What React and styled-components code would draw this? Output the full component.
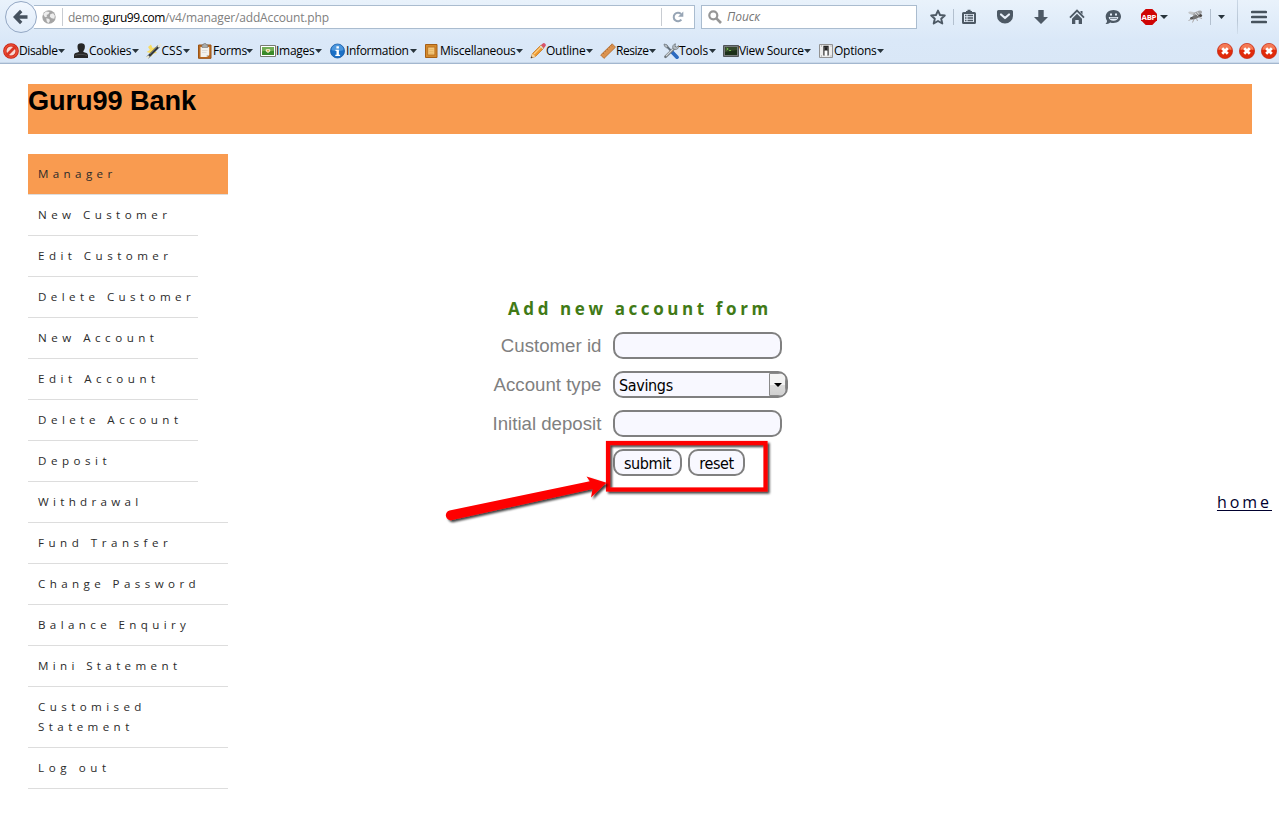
import React from 'react';
import styled, { createGlobalStyle } from 'styled-components';

const Global = createGlobalStyle`
  * { box-sizing: border-box; }
  body { margin: 0; background: #fff; overflow: hidden; font-family: "Open Sans", "Noto Sans", sans-serif; }
  svg { display: block; flex: none; }
`;

const Screen = styled.div`
  position: relative;
  width: 1279px;
  height: 823px;
  overflow: hidden;
`;

/* ---------- browser chrome ---------- */
const Chrome = styled.header`
  height: 64px;
  border-bottom: 1px solid #a3b7cf;
  box-shadow: inset 0 -1px #c9d8e9;
  background: linear-gradient(#e9f2fb 0, #dae8f8 40px, #d9e7f7 100%);
`;
const NavBar = styled.div`
  display: flex;
  align-items: center;
  height: 34px;
  padding-left: 5px;
`;
const BackButton = styled.button`
  position: relative;
  z-index: 1;
  flex: none;
  display: grid;
  place-items: center;
  width: 32px;
  height: 32px;
  padding: 0;
  border: 1px solid #94a8c4;
  border-radius: 50%;
  background: linear-gradient(#f1f7fe, #dfebf9);
`;
const UrlBox = styled.div`
  display: flex;
  align-items: center;
  width: 661px;
  height: 24px;
  margin-left: -3px;
  padding-left: 8px;
  border: 1px solid #aabccf;
  border-left: 0;
  background: #fff;
`;
const FieldLine = styled.i`
  width: 1px;
  height: 18px;
  margin: ${(p) => p.$m || '0'};
  background: #c8ccd2;
`;
const Url = styled.div`
  flex: 1;
  display: flex;
  font-size: 12px;
  line-height: 23px;
  white-space: pre;
  color: #808080;
`;
const UrlPart = styled.span`
  width: ${(p) => p.$w}px;
  letter-spacing: ${(p) => p.$ls}px;
  color: ${(p) => (p.$strong ? '#000' : 'inherit')};
`;
const SearchBox = styled.div`
  display: flex;
  align-items: center;
  gap: 5px;
  width: 216px;
  height: 24px;
  margin-left: 6px;
  padding-left: 6px;
  border: 1px solid #aabccf;
  background: #fff;
  color: #757575;
  font: italic 12px/22px "Open Sans", sans-serif;
`;
const Slot = styled.span`
  display: block;
  margin-left: ${(p) => p.$gap}px;
`;
const Rule = styled.i`
  width: 1px;
  height: ${(p) => p.$h}px;
  margin-left: ${(p) => p.$gap}px;
  background: ${(p) => (p.$fade ? 'linear-gradient(#cbd8e6, #b9c7d6 60%, #d2dfed)' : '#b3c0cf')};
`;
const DevBar = styled.div`
  display: flex;
  align-items: center;
  height: 30px;
  padding: 3px 3px 0 3px;
`;
const DevItem = styled.div`
  display: flex;
  align-items: center;
  margin-right: ${(p) => p.$after}px;
`;
const DevLabel = styled.span`
  width: ${(p) => p.$w}px;
  font-size: 12px;
  line-height: 16px;
  letter-spacing: ${(p) => p.$ls}px;
  white-space: nowrap;
  color: #000;
`;
const Errors = styled.div`
  display: flex;
  gap: 6px;
  margin-left: auto;
  margin-right: -1px;
`;

/* ---------- page ---------- */
const Page = styled.main`
  padding: 20px 27px 0 28px;
`;
const Banner = styled.h1`
  height: 50px;
  margin: 0 0 20px;
  background: #f99b50;
  color: #000;
  font: bold 27.2px/34px "Liberation Sans", Arial, sans-serif;
  letter-spacing: -0.1px;
`;
const Columns = styled.div`
  display: flex;
  align-items: flex-start;
`;
const Menu = styled.ul`
  flex: none;
  width: 200px;
  margin: 0;
  padding: 0;
  list-style: none;
`;
const MenuItem = styled.li`
  width: ${(p) => (p.$narrow ? 170 : 200)}px;
  padding: 10px 0 10px 10px;
  border-bottom: 1px solid #ddd;
  background: ${(p) => (p.$active ? '#f99b50' : 'transparent')};
  color: #2b2b2b;
  font-size: 11.6px;
  line-height: 20px;
  letter-spacing: ${(p) => p.$ls}px;
  white-space: pre;
`;
const Form = styled.form`
  margin: 145px 0 0 260px;
`;
const FormTitle = styled.h2`
  margin: 0 0 13px 20px;
  color: #417a16;
  font-size: 17px;
  font-weight: bold;
  line-height: 20px;
  letter-spacing: 3.6px;
  white-space: nowrap;
`;
const Fields = styled.div`
  display: grid;
  grid-template-columns: 114px 175px;
  grid-auto-rows: 27px;
  gap: 12px 11px;
`;
const Label = styled.label`
  padding-right: 0.6px;
  color: #808080;
  font: 18.67px/27px "Liberation Sans", Arial, sans-serif;
  text-align: right;
  white-space: nowrap;
`;
const Input = styled.input`
  width: 169px;
  height: 27px;
  border: 2px solid #808080;
  border-radius: 10px;
  background: #f8f8ff;
  outline: 0;
`;
const Select = styled.div`
  display: flex;
  height: 27px;
  overflow: hidden;
  border: 2px solid #808080;
  border-radius: 10px;
  background: #f8f8ff;
  padding-left: 4px;
  color: #000;
  font: 16px/25px "DejaVu Sans Condensed", "DejaVu Sans", sans-serif;
  letter-spacing: -0.35px;
`;
const SelectArrow = styled.span`
  display: grid;
  place-items: center;
  width: 17px;
  margin-left: auto;
  border: 1px solid #8a8a8a;
  border-radius: 0 3px 3px 0;
  background: linear-gradient(#f3f3f3 50%, #dcdcdc 50%, #d0d0d0);
`;
const Buttons = styled.div`
  grid-column: 2;
  display: flex;
  gap: 6px;
`;
const Button = styled.button`
  width: ${(p) => p.$w}px;
  height: 27px;
  padding: 2px 0 0;
  border: 2px solid #808080;
  border-radius: 10px;
  background: #f8f8ff;
  color: #000;
  font: 16px/21px "DejaVu Sans Condensed", "DejaVu Sans", sans-serif;
  letter-spacing: -0.4px;
`;
const HomeLink = styled.a`
  margin: 338px -20px 0 auto;
  color: #00002e;
  font-size: 16px;
  line-height: 20px;
  letter-spacing: 2.95px;
  text-decoration: underline;
  text-decoration-thickness: 1px;
  text-underline-offset: 2px;
`;
const Annotation = styled.svg`
  position: absolute;
  left: 440px;
  top: 435px;
  pointer-events: none;
`;

const Svg = ({ w = 16, h = 16, children }) => (
  <svg width={w} height={h} viewBox={`0 0 ${w} ${h}`} fill="none">{children}</svg>
);
const Caret = ({ w = 7, h = 4, c = '#28343c' }) => (
  <Svg w={w} h={h}><path d={`M0 0h${w}L${w / 2} ${h}z`} fill={c} /></Svg>
);

const DARK = '#4d5965';
const BackIcon = () => (
  <Svg><path d="M8.2 2 2.3 8l5.900 6M3 8h11.500" stroke="#46525f" strokeWidth="3.3" /></Svg>
);
const GlobeIcon = () => (
  <Svg w={14} h={14}>
    <circle cx="7" cy="7" r="6.7" fill="#a4a4a4" />
    <path d="M1.2 4.2 4 1.5 7.6 2 6.4 4.2 4.5 5l.8 1.6L3 7.3zM8.3 4.3l2.800-1.100 1.800 2.500-.6 3-2.700-.4-1.800-1.600zM4.300 8.300l3 .8.6 2-1.700 2.100-1.500-2z" fill="#ededed" />
  </Svg>
);
const ReloadIcon = () => (
  <Svg w={12} h={12}>
    <path d="M9.4 8.7A4.3 4.3 0 1 1 9 2.9" stroke="#97a5b5" strokeWidth="2" />
    <path d="M11.3.5v5.2H6.1z" fill="#97a5b5" />
  </Svg>
);
const SearchIcon = () => (
  <Svg w={14} h={14}>
    <circle cx="5.3" cy="5.3" r="4" stroke="#969696" strokeWidth="2.2" />
    <path d="m8.4 8.4 4.6 4.6" stroke="#969696" strokeWidth="2.7" />
  </Svg>
);
const StarIcon = () => (
  <Svg><path d="m8 1.6 2 4.4 4.8.5-3.6 3.2 1.1 4.8L8 12l-4.3 2.5 1.1-4.8L1.2 6.5 6 6z" stroke={DARK} strokeWidth="1.9" strokeLinejoin="round" /></Svg>
);
const ListIcon = () => (
  <Svg>
    <path d="M5 3V2h1.5V.8h3V2H11v1h2.5A1.5 1.5 0 0 1 15 4.500v9A1.5 1.500 0 0 1 13.500 15h-11A1.500 1.500 0 0 1 1 13.500v-9A1.500 1.500 0 0 1 2.500 3z" fill={DARK} />
    <path d="M3 5h10v8H3z" fill="#e3edf8" />
    <path d="M4 6.500h1.500M6.500 6.500H12M4 9h1.500M6.500 9H12M4 11.500h1.500M6.500 11.500H12" stroke={DARK} strokeWidth="1.300" />
  </Svg>
);
const PocketIcon = () => (
  <Svg>
    <path d="M1.500 1h13a1.500 1.500 0 0 1 1.500 1.500V7a8 7.500 0 0 1-16 0V2.500A1.500 1.500 0 0 1 1.500 1z" fill={DARK} />
    <path d="M4 5.500 8 9l4-3.500" stroke="#e8f0fa" strokeWidth="2.200" strokeLinecap="round" strokeLinejoin="round" />
  </Svg>
);
const DownIcon = () => (
  <Svg><path d="M5.300 1h5.400v7H15l-7 7-7-7h4.300z" fill={DARK} /></Svg>
);
const HomeIcon = () => (
  <Svg>
    <path d="m1 8.700 7-7 7 7" stroke={DARK} strokeWidth="1.900" />
    <path d="M8 4.700 13 9.700V15H9.700v-4H6.300v4H3V9.700zM11.500 2h2v3.500l-2-2z" fill={DARK} />
  </Svg>
);
const SmileIcon = () => (
  <Svg>
    <path d="M8.500 1C12.800 1 16 3.800 16 7.500S12.800 14 8.500 14c-1.200 0-2.300-.2-3.300-.6C4 14.500 2.300 15 .5 15c1-1 1.500-2 1.500-3.300C1.200 10.500.7 9 .7 7.500.7 3.800 4.200 1 8.500 1z" fill={DARK} />
    <path d="M5 4.500h2v2H5zM10 4.500h2v2h-2zM3.700 8h9.600a4.800 3.800 0 0 1-9.600 0z" fill="#e6effa" />
    <path d="M5 9.300h7" stroke={DARK} strokeWidth=".8" />
  </Svg>
);
const AbpIcon = () => (
  <Svg>
    <path d="M4.700 0h6.600L16 4.700v6.600L11.300 16H4.700L0 11.300V4.700z" fill="#cf0404" />
    <text x="7.900" y="10.900" textAnchor="middle" fontFamily="Open Sans, sans-serif" fontSize="7.800" fontWeight="bold" fill="#fff" letterSpacing="-.3">ABP</text>
  </Svg>
);
const FlyIcon = () => (
  <Svg>
    <ellipse cx="6" cy="4.500" rx="4.800" ry="1.600" transform="rotate(14 6 4.500)" fill="#c4c7ca" />
    <ellipse cx="10.500" cy="4.500" rx="4.800" ry="2.200" transform="rotate(-24 10.500 4.500)" fill="#a3a5a8" />
    <ellipse cx="8.500" cy="8" rx="4.300" ry="1.900" transform="rotate(-20 8.500 8)" fill="#737373" />
    <circle cx="13.500" cy="6.500" r="1.600" fill="#4b4745" />
    <circle cx="4.500" cy="9.300" r="1.300" fill="#4c4c4c" />
    <path d="m5 10-3.500 1.500M7 10l-1.500 3.500M9.500 9.500l1 2.500M12 8.500l3 1" stroke="#9a9693" strokeWidth=".8" />
    <path d="m8 4 3 3M10 2.500l2 3" stroke="#eee" strokeWidth=".7" />
  </Svg>
);
const HamburgerIcon = () => (
  <Svg><path d="M1.200 3h13.600M1.200 8h13.600M1.200 13h13.600" stroke="#47535d" strokeWidth="2.700" strokeLinecap="round" /></Svg>
);
const ErrorIcon = () => (
  <Svg>
    <circle cx="8" cy="8" r="7.600" fill="#e02a0a" stroke="#c32a16" strokeWidth=".7" />
    <path d="M1.500 7a6.500 6.300 0 0 1 13 0c-3-1.500-10-1.500-13 0z" fill="#f47a55" />
    <path d="m5.200 5.200 5.600 5.600m0-5.600-5.600 5.600" stroke="#fff" strokeWidth="2.700" />
  </Svg>
);

const icons = {
  disable: (
    <Svg>
      <circle cx="8" cy="8" r="6.200" fill="#f7d9d2" stroke="#c62015" strokeWidth="3.300" />
      <circle cx="8" cy="8" r="6.100" stroke="#e84a31" strokeWidth="1.900" />
      <path d="m3.500 12.500 9-9" stroke="#d93624" strokeWidth="2.800" />
    </Svg>
  ),
  cookies: (
    <Svg>
      <path d="M4.500 3.500a3.700 3.300 0 0 1 7.400 0c0 2.500-1 3.800-1.700 5 .4 1.500 4.800.5 4.800 4V15H1v-2.500c0-3.500 4.600-2.500 5-4-.8-1.200-1.500-2.500-1.500-5z" fill="#272727" />
      <path d="M2 12.500c3-1.500 9-1.500 12 0" stroke="#555" strokeWidth=".8" />
    </Svg>
  ),
  css: (
    <Svg>
      <path d="M5 1.500 6.500 5 10 4 8.500 7.500 11 10l-4 .5L5 14 4 10 .5 9 4 7 2 4z" fill="#f8dc61" />
      <path d="M1.500 14.500 13 3" stroke="#33383d" strokeWidth="2.700" />
      <path d="m1 15 2-2m9-9 3-3" stroke="#e8e8d8" strokeWidth="2.300" />
      <path d="m4 11 7-7" stroke="#8d9499" strokeWidth=".6" />
    </Svg>
  ),
  forms: (
    <Svg>
      <path d="M1.500 2h12.500v13.300H1.500z" fill="#bd6c22" stroke="#995315" />
      <path d="M3.500 4h8.700v8l-2.500 2H3.500z" fill="#f2f2ee" />
      <path d="M12.200 12H9.700v2z" fill="#bfbdb5" />
      <path d="M5 1.800h1.300a1.500 1.500 0 0 1 3 0h1.500v2.700H5z" fill="#a9aba9" stroke="#777" strokeWidth=".6" />
      <path d="M5 7.500h5.500M5 9.500h4.500" stroke="#d5d5d3" strokeWidth=".8" />
    </Svg>
  ),
  images: (
    <Svg>
      <path d="M.5 2.500h15v11H.5z" fill="#fff" stroke="#777b72" />
      <path d="M2 4h12v8H2z" fill="#3b8a28" />
      <path d="M2 4h12v3.500c-3 2-8-1-12 1z" fill="#72ad55" />
      <path d="M6 8.500c-1-1.500 0-3 2-2.500 2-.5 3 1 2 2.500L8 10z" fill="#eee9c8" />
      <circle cx="8" cy="7.600" r=".9" fill="#c9a52e" />
    </Svg>
  ),
  info: (
    <Svg>
      <circle cx="7.500" cy="8" r="7" fill="#1b70c6" stroke="#1558a2" strokeWidth=".8" />
      <path d="M1.500 7a6 5.800 0 0 1 12 0c-3 1.500-9 1.500-12 0z" fill="#4b96dc" />
      <path d="M6.400 3.200h2.500v2.200H6.400zM5.500 6.700h3.400v5h1.200v1.300H5.300v-1.300h1.200V8h-1z" fill="#fff" />
    </Svg>
  ),
  misc: (
    <Svg>
      <path d="M1.500 1.500h11.500v13H1.500z" fill="#d48a2c" stroke="#a65f16" />
      <path d="M3.700 4h7.200v8H3.700z" fill="#f3c77c" stroke="#b9711f" strokeWidth=".9" />
      <path d="M5.200 6.500h4.200M5.200 8.500h4.200M5.200 10.300h4.200" stroke="#e3b362" strokeWidth=".7" />
    </Svg>
  ),
  outline: (
    <Svg>
      <path d="m1 15 1.500-4.500L11 2l3 3-8.500 8.500z" fill="#ef9a2e" stroke="#bf6f1c" strokeWidth=".7" />
      <path d="m4 11 8-8" stroke="#fbd08a" strokeWidth="1.100" />
      <path d="m11 2 1.500-1.300a1.800 1.800 0 0 1 2.700 2.700L14 5z" fill="#d8536b" />
      <path d="m10.200 2.800 3 3" stroke="#d8dce0" strokeWidth="1.200" />
      <path d="m1 15 1.500-4.500 3 3z" fill="#f1d3a1" /><path d="m.7 15.300.7-2 1.300 1.300z" fill="#333" />
    </Svg>
  ),
  resize: (
    <Svg>
      <path d="M.7 12 12.200.8 15.500 4.200 4 15.400z" fill="#dc9350" stroke="#b06c32" strokeWidth=".8" />
      <path d="m3 10 1.200 1.200M5 8l.8.8M7 6l1.200 1.200M9 4l.8.8M11 2.300l1.200 1.200" stroke="#9c5c28" strokeWidth=".6" />
    </Svg>
  ),
  tools: (
    <Svg>
      <path d="M3 2.500 13 13" stroke="#63707c" strokeWidth="2" />
      <path d="m9 9 5 5.200" stroke="#2d6bc0" strokeWidth="3.700" strokeLinecap="round" />
      <path d="M2.500 13.800 12 4.500" stroke="#6f777d" strokeWidth="2.700" strokeLinecap="round" />
      <path d="m3 13 9-9" stroke="#d2d7da" strokeWidth="1.100" />
      <path d="M10 5.500A3.300 3.300 0 0 1 12.500.8l-.6 2.600 1.800.7 1.800-1.500c.6 2.700-1.500 4.300-3.800 3.800z" fill="#b9c0c5" stroke="#666e74" strokeWidth=".7" />
      <path d="m1 1 3 .8 1 2-1.500 1-2-1.500z" fill="#b8bfc5" stroke="#596269" strokeWidth=".6" />
    </Svg>
  ),
  source: (
    <Svg>
      <path d="M.5 2.500h15v11H.5z" fill="#777b7c" stroke="#50565a" />
      <path d="M2 4h12v8H2z" fill="#1b3019" />
      <path d="M2 4h12v3L2 9z" fill="#35482c" />
      <path d="m3.500 5 1.700 1-1.700 1M6 7.500h2" stroke="#82d453" strokeWidth=".8" />
    </Svg>
  ),
  options: (
    <Svg>
      <path d="M1.500 1.500h13v13h-13z" fill="#ececec" stroke="#929292" />
      <path d="M6 12.500v-9h4v9" stroke="#262626" strokeWidth="1.300" />
      <path d="M6.600 4.100h2.800v3.500H6.600z" fill="#222" />
      <path d="M6.700 7.800h2.600v4.500H6.700z" fill="#fff" />
      <path d="M3 3h1M12.500 3h1M3 13h1M12.500 13h1" stroke="#999" />
    </Svg>
  ),
};

/* icon, label, label width, letter spacing, space after */
const DEV_TOOLS = [
  ['disable', 'Disable', 39, -0.38, 8],
  ['cookies', 'Cookies', 43, -0.2, 6.5],
  ['css', 'CSS', 21, 0, 7.5],
  ['forms', 'Forms', 33, -0.25, 7],
  ['images', 'Images', 39, -0.27, 8],
  ['info', 'Information', 64, -0.36, 7],
  ['misc', 'Miscellaneous', 76, -0.28, 7],
  ['outline', 'Outline', 40, -0.25, 7],
  ['resize', 'Resize', 33, -0.45, 7],
  ['tools', 'Tools', 30, -0.15, 7],
  ['source', 'View Source', 65, -0.3, 7],
  ['options', 'Options', 43, -0.25, 0],
];

/* label, letter spacing, width variant */
const MENU = [
  ['Manager', 4.37, 'active'],
  ['New Customer', 4.42, 'narrow'],
  ['Edit Customer', 4.45, 'narrow'],
  ['Delete Customer', 4.41, 'narrow'],
  ['New Account', 4.5, 'narrow'],
  ['Edit Account', 4.53, 'narrow'],
  ['Delete Account', 4.48, 'narrow'],
  ['Deposit', 4.5, 'narrow'],
  ['Withdrawal', 4.3],
  ['Fund Transfer', 4.5],
  ['Change Password', 4.4],
  ['Balance Enquiry', 4.37],
  ['Mini Statement', 4.35],
  ['Customised\nStatement', 4.4],
  ['Log out', 4.6],
];

export default function App() {
  return (
    <Screen>
      <Global />
      <Chrome>
        <NavBar>
          <BackButton aria-label="Back"><BackIcon /></BackButton>
          <UrlBox>
            <GlobeIcon />
            <FieldLine $m="0 5px 0 6px" />
            <Url>
              <UrlPart $w={34.5} $ls={-0.22}>demo.</UrlPart>
              <UrlPart $w={62.5} $ls={-0.46} $strong>guru99.com</UrlPart>
              <UrlPart $w={165} $ls={-0.15}>/v4/manager/addAccount.php</UrlPart>
            </Url>
            <FieldLine />
            <Slot $gap={10}><ReloadIcon /></Slot>
            <Slot $gap={10} />
          </UrlBox>
          <SearchBox><SearchIcon />Поиск</SearchBox>
          <Slot $gap={13}><StarIcon /></Slot>
          <Rule $h={16} $gap={7} />
          <Slot $gap={7}><ListIcon /></Slot>
          <Slot $gap={20}><PocketIcon /></Slot>
          <Slot $gap={20}><DownIcon /></Slot>
          <Slot $gap={20}><HomeIcon /></Slot>
          <Slot $gap={20}><SmileIcon /></Slot>
          <Slot $gap={20}><AbpIcon /></Slot>
          <Slot $gap={3}><Caret w={8} /></Slot>
          <Slot $gap={19}><FlyIcon /></Slot>
          <Rule $h={16} $gap={7} />
          <Slot $gap={7}><Caret /></Slot>
          <Rule $h={34} $gap={12} $fade />
          <Slot $gap={13}><HamburgerIcon /></Slot>
        </NavBar>
        <DevBar>
          {DEV_TOOLS.map(([icon, label, w, ls, after]) => (
            <DevItem key={label} $after={after}>
              {icons[icon]}
              <DevLabel $w={w} $ls={ls}>{label}</DevLabel>
              <Caret />
            </DevItem>
          ))}
          <Errors><ErrorIcon /><ErrorIcon /><ErrorIcon /></Errors>
        </DevBar>
      </Chrome>

      <Page>
        <Banner>Guru99 Bank</Banner>
        <Columns>
          <Menu>
            {MENU.map(([label, ls, kind]) => (
              <MenuItem key={label} $ls={ls} $active={kind === 'active'} $narrow={kind === 'narrow'}>{label}</MenuItem>
            ))}
          </Menu>
          <Form>
            <FormTitle>Add new account form</FormTitle>
            <Fields>
              <Label>Customer id</Label>
              <Input />
              <Label>Account type</Label>
              <Select>Savings<SelectArrow><Caret w={8} c="#000" /></SelectArrow></Select>
              <Label>Initial deposit</Label>
              <Input />
              <Buttons>
                <Button type="button" $w={69}>submit</Button>
                <Button type="button" $w={57}>reset</Button>
              </Buttons>
            </Fields>
          </Form>
          <HomeLink>home</HomeLink>
        </Columns>
      </Page>

      <Annotation width="345" height="100" viewBox="440 435 345 100" fill="none">
        <defs>
          <filter id="drop" x="-10%" y="-20%" width="120%" height="150%">
            <feDropShadow dx="2" dy="2" stdDeviation="1.3" floodColor="#000" floodOpacity=".75" />
          </filter>
        </defs>
        <rect x="608" y="443" width="157.500" height="46.500" stroke="#fe0000" strokeWidth="4.200" filter="url(#drop)" />
        <path d="M449.500 510.500 589.800 481.300 586.500 476.500 606.500 482.700 591 497.500 592.500 489 452 520a4.900 4.900 0 0 1-2.500-9.500z" fill="#fe0000" filter="url(#drop)" />
      </Annotation>
    </Screen>
  );
}
